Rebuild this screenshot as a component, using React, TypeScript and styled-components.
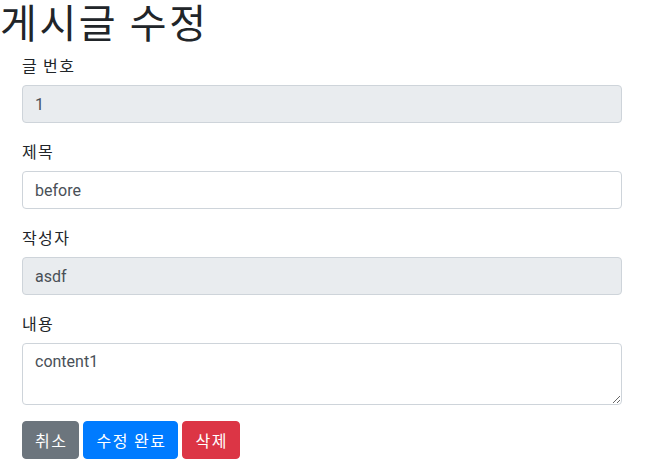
import React from "react";
import styled, { createGlobalStyle } from "styled-components";

const Global = createGlobalStyle`
  html, body { margin: 0; padding: 0; background: #fff; }
  body {
    font-family: "Segoe UI", Roboto, "Noto Sans CJK KR", sans-serif;
    font-size: 16px;
    line-height: 1.5;
    color: #212529;
  }
  * { box-sizing: border-box; }
`;

const Title = styled.h1`
  margin: 0 0 11px 0;
  font-size: 40px;
  font-weight: 400;
  line-height: 42px;
  letter-spacing: 2.6px;
  white-space: nowrap;
  font-family: "Noto Sans CJK KR", sans-serif;
`;

const Form = styled.form`
  width: 600px;
  margin-left: 22px;
`;

const Group = styled.div`
  margin-bottom: 16px;
`;

const Label = styled.label`
  display: inline-block;
  margin-bottom: 8px;
  font-family: "Noto Sans CJK KR", sans-serif;
  line-height: 24px;
  letter-spacing: 1.4px;
`;

const Input = styled.input<{ $disabled?: boolean }>`
  display: block;
  width: 100%;
  height: 38px;
  padding: 6px 12px;
  font-size: 16px;
  line-height: 24px;
  font-family: "Segoe UI", Roboto, "Noto Sans CJK KR", sans-serif;
  color: #495057;
  background: ${(p) => (p.$disabled ? "#e9ecef" : "#fff")};
  border: 1px solid #ced4da;
  border-radius: 4px;
  outline: none;
`;

const TextArea = styled.textarea`
  display: block;
  width: 100%;
  height: 62px;
  padding: 6px 12px;
  font-size: 16px;
  line-height: 24px;
  font-family: "Segoe UI", Roboto, "Noto Sans CJK KR", sans-serif;
  color: #495057;
  background: #fff;
  border: 1px solid #ced4da;
  border-radius: 4px;
  outline: none;
  resize: vertical;
`;

const Buttons = styled.div`
  display: flex;
  gap: 4px;
`;

const Button = styled.button<{ $bg: string }>`
  height: 38px;
  padding: 6px 11px 6px 12px;
  font-size: 16px;
  line-height: 24px;
  letter-spacing: 1.5px;
  font-family: "Noto Sans CJK KR", sans-serif;
  color: #fff;
  background: ${(p) => p.$bg};
  border: 1px solid ${(p) => p.$bg};
  border-radius: 4px;
  cursor: pointer;
`;

export default function App() {
  return (
    <>
      <Global />
      <Title>게시글 수정</Title>
      <Form onSubmit={(e) => e.preventDefault()}>
        <Group>
          <Label>글 번호</Label>
          <Input $disabled readOnly value="1" />
        </Group>
        <Group>
          <Label>제목</Label>
          <Input defaultValue="before" />
        </Group>
        <Group>
          <Label>작성자</Label>
          <Input $disabled readOnly value="asdf" />
        </Group>
        <Group>
          <Label>내용</Label>
          <TextArea rows={2} defaultValue="content1" />
        </Group>
        <Buttons>
          <Button type="button" $bg="#6c757d">취소</Button>
          <Button type="submit" $bg="#007bff">수정 완료</Button>
          <Button type="button" $bg="#dc3545">삭제</Button>
        </Buttons>
      </Form>
    </>
  );
}
